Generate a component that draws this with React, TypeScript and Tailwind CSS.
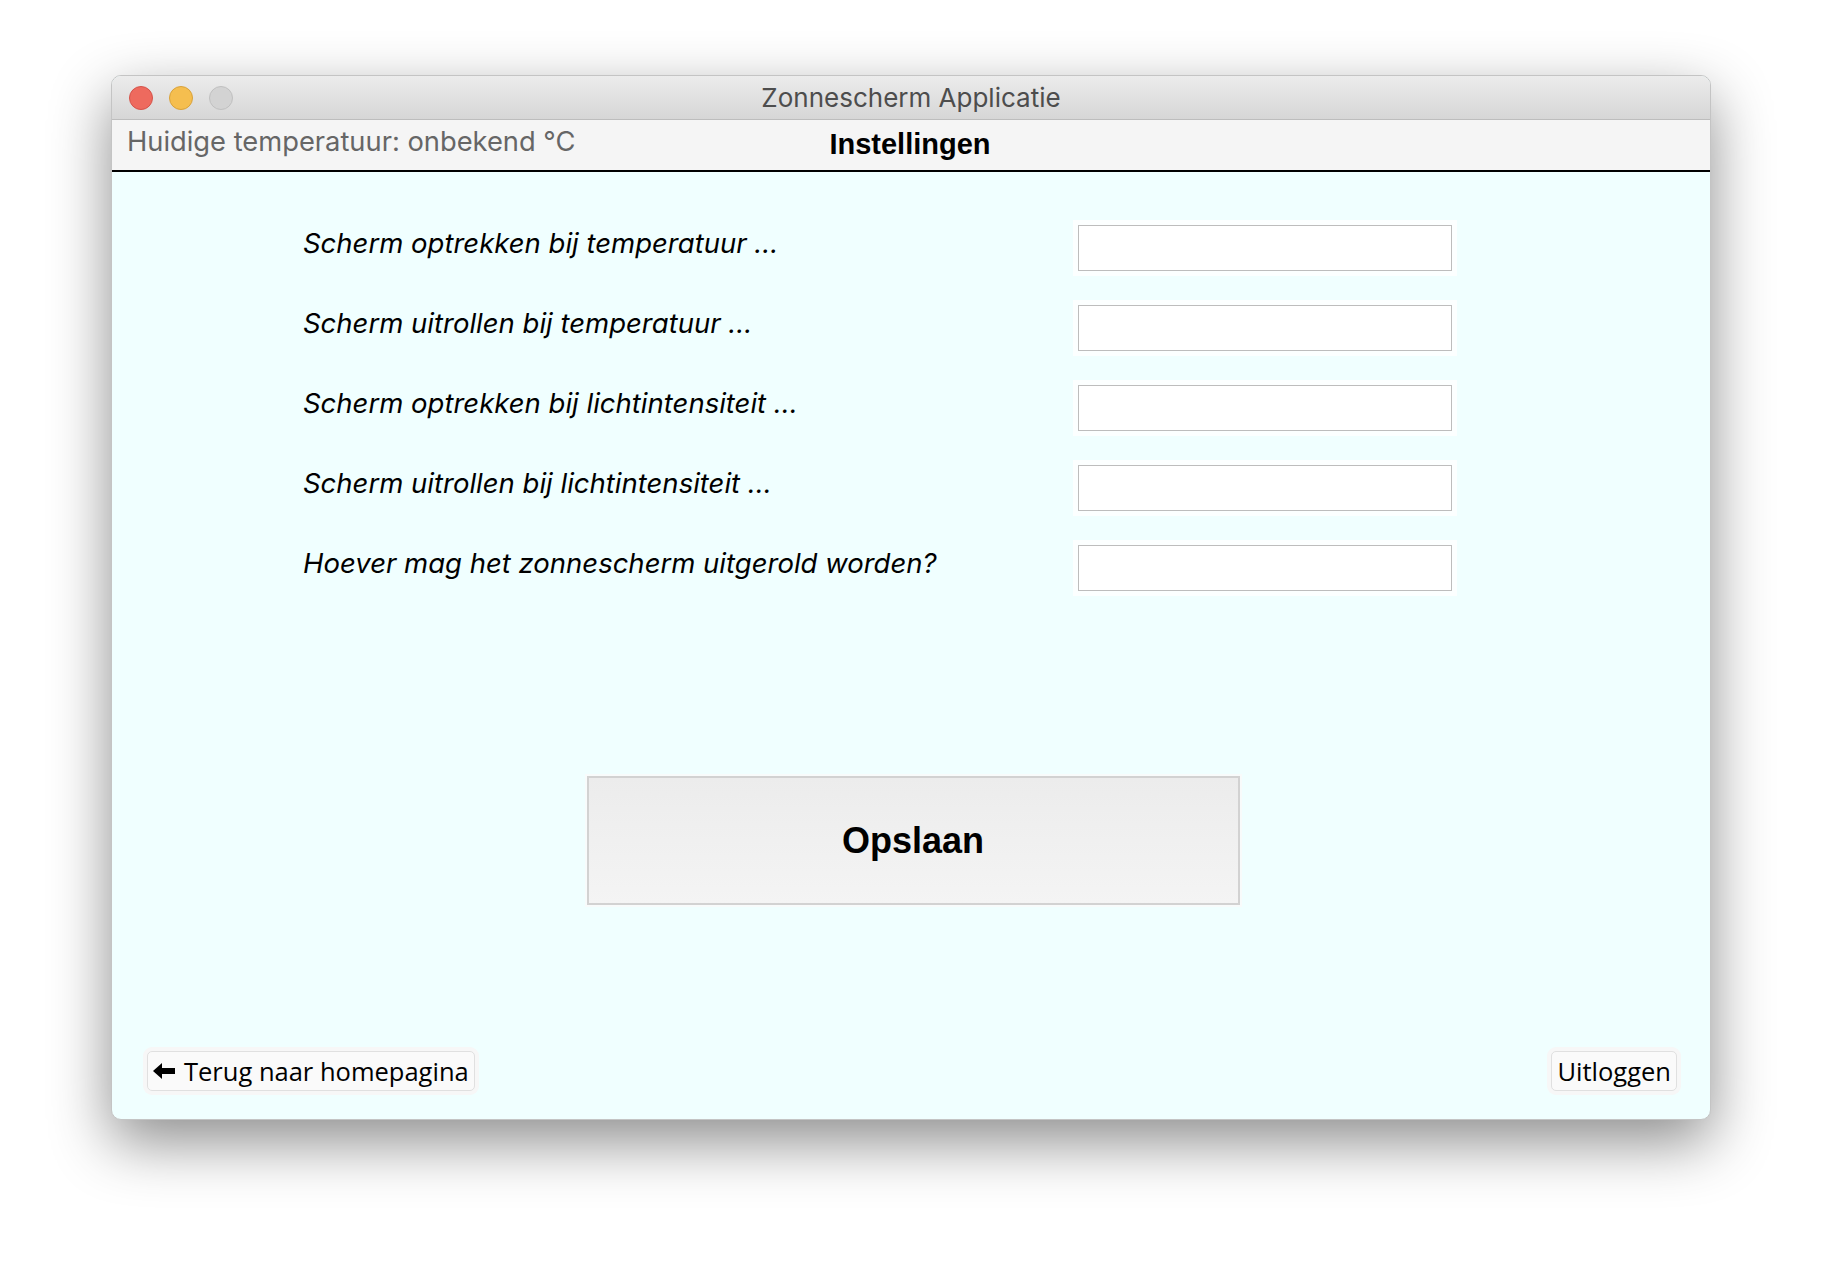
const labels = [
  "Scherm optrekken bij temperatuur ...",
  "Scherm uitrollen bij temperatuur ...",
  "Scherm optrekken bij lichtintensiteit ...",
  "Scherm uitrollen bij lichtintensiteit ...",
  "Hoever mag het zonnescherm uitgerold worden?",
];

function TrafficLights() {
  return (
    <div className="flex items-center gap-[16px]">
      <div className="w-[24px] h-[24px] rounded-full bg-[#ee6a5e] border border-[#d5534a]" />
      <div className="w-[24px] h-[24px] rounded-full bg-[#f5be4f] border border-[#d9a23b]" />
      <div className="w-[24px] h-[24px] rounded-full bg-[#d3d3d3] border border-[#c0c0c0]" />
    </div>
  );
}

function SettingRow({ label }: { label: string }) {
  return (
    <div className="flex items-center h-[46px]">
      <div className="w-[775px] pb-[8px] text-[27.5px] italic text-black font-['Inter',sans-serif] leading-none">
        {label}
      </div>
      <input
        type="text"
        className="w-[374px] h-[46px] bg-white border border-[#bdbdbd] shadow-[0_0_0_5px_#fcffff] outline-none"
      />
    </div>
  );
}

export default function App() {
  return (
    <div className="w-[1824px] h-[1268px] bg-white pt-[75px] pl-[111px] font-['Liberation_Sans',sans-serif]">
      <div className="w-[1600px] h-[1045px] rounded-[10px] overflow-hidden flex flex-col border border-[#c4c4c4] shadow-[0_22px_60px_rgba(0,0,0,0.45)] bg-[#f0ffff]">
        {/* title bar */}
        <div className="relative h-[44px] shrink-0 flex items-center px-[17px] bg-gradient-to-b from-[#ececec] to-[#d6d6d6] border-b border-[#bdbdbd]">
          <TrafficLights />
          <div className="absolute inset-0 flex items-center justify-center text-[26px] text-[#4d4d4d] font-['Inter',sans-serif] pointer-events-none">
            Zonnescherm Applicatie
          </div>
        </div>

        {/* header */}
        <div className="h-[52px] shrink-0 grid grid-cols-[1fr_auto_1fr] items-center pl-[15px] pr-[17px] bg-[#f5f5f5] border-b-2 border-black">
          <div className="text-[27.3px] text-[#666666] pb-[6px] font-['Inter',sans-serif]">
            Huidige temperatuur: onbekend °C
          </div>
          <div className="text-[29px] font-bold text-black">Instellingen</div>
          <div />
        </div>

        {/* content */}
        <div className="flex-1 flex flex-col">
          <div className="pl-[191px] pt-[53px] flex flex-col gap-[34px]">
            {labels.map((l, i) => (
              <SettingRow key={i} label={l} />
            ))}
          </div>

          <div className="flex justify-center mt-[185px] pl-[4px]">
            <button className="w-[653px] h-[129px] border-2 border-[#d2d2d2] bg-gradient-to-b from-[#ececec] to-[#f4f4f4] shadow-[0_0_0_2px_#f8fbfb] text-[36px] font-bold text-black">
              Opslaan
            </button>
          </div>

          <div className="mt-auto mb-[28px] flex justify-between items-center pl-[35px] pr-[33px]">
            <button className="h-[40px] flex items-center gap-[9px] px-[5px] rounded-[5px] bg-[#fafafa] border border-[#e0e0e0] shadow-[0_0_0_4px_#f7f7f7] text-[25.5px] text-black font-['Open_Sans',sans-serif]">
              <svg width="22" height="16" viewBox="0 0 22 16">
                <path d="M0 8 L9 0 L9 5 L22 5 L22 11 L9 11 L9 16 Z" fill="black" />
              </svg>
              Terug naar homepagina
            </button>
            <button className="h-[40px] flex items-center px-[5px] rounded-[5px] bg-[#fafafa] border border-[#e0e0e0] shadow-[0_0_0_4px_#f7f7f7] text-[25.5px] text-black font-['Open_Sans',sans-serif]">
              Uitloggen
            </button>
          </div>
        </div>
      </div>
    </div>
  );
}
